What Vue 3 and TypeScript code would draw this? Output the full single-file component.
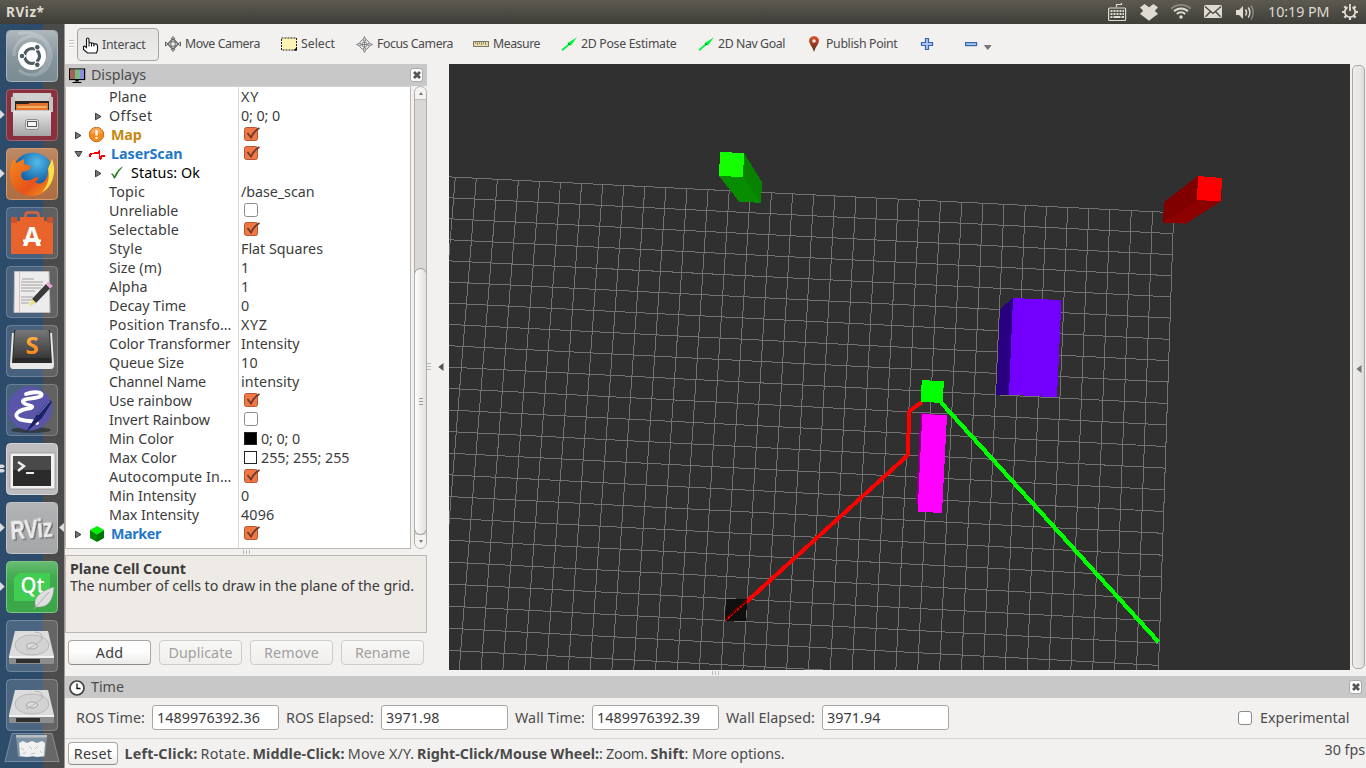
<script setup lang="ts">
import type { Directive } from 'vue'

// Tracks a label out (or in) so that it occupies the given width in pixels.
const vFit: Directive<HTMLElement, number> = {
  mounted(el, { value }) {
    if (!value) return
    const n = (el.textContent ?? '').length
    const natural = el.getBoundingClientRect().width
    if (n) el.style.letterSpacing = `${((value - natural) / n).toFixed(3)}px`
  },
}

interface Row {
  name: string
  w: number
  level: 0 | 1
  arrow?: 'right' | 'down'
  icon?: 'warn' | 'laser' | 'ok' | 'cube'
  tone?: 'gold' | 'blue' | 'black'
  value?: string
  vw?: number
  check?: boolean
  swatch?: 'black' | 'white'
}

const rows: Row[] = [
  { name: 'Plane', w: 37.5, level: 1, value: 'XY', vw: 18 },
  { name: 'Offset', w: 43.5, level: 1, arrow: 'right', value: '0; 0; 0', vw: 39 },
  { name: 'Map', w: 30.5, level: 0, arrow: 'right', icon: 'warn', tone: 'gold', check: true },
  { name: 'LaserScan', w: 71.5, level: 0, arrow: 'down', icon: 'laser', tone: 'blue', check: true },
  { name: 'Status: Ok', w: 69, level: 1, arrow: 'right', icon: 'ok', tone: 'black' },
  { name: 'Topic', w: 36, level: 1, value: '/base_scan', vw: 73.5 },
  { name: 'Unreliable', w: 69.5, level: 1, check: false },
  { name: 'Selectable', w: 70, level: 1, check: true },
  { name: 'Style', w: 33.5, level: 1, value: 'Flat Squares', vw: 82 },
  { name: 'Size (m)', w: 52.5, level: 1, value: '1', vw: 8 },
  { name: 'Alpha', w: 38.5, level: 1, value: '1', vw: 8 },
  { name: 'Decay Time', w: 77, level: 1, value: '0', vw: 8 },
  { name: 'Position Transfo…', w: 122.5, level: 1, value: 'XYZ', vw: 26.5 },
  { name: 'Color Transformer', w: 121.5, level: 1, value: 'Intensity', vw: 58.5 },
  { name: 'Queue Size', w: 75, level: 1, value: '10', vw: 17 },
  { name: 'Channel Name', w: 97, level: 1, value: 'intensity', vw: 58.5 },
  { name: 'Use rainbow', w: 83, level: 1, check: true },
  { name: 'Invert Rainbow', w: 101, level: 1, check: false },
  { name: 'Min Color', w: 65, level: 1, swatch: 'black', value: '0; 0; 0', vw: 39 },
  { name: 'Max Color', w: 67.5, level: 1, swatch: 'white', value: '255; 255; 255', vw: 88.5 },
  { name: 'Autocompute In…', w: 122.5, level: 1, check: true },
  { name: 'Min Intensity', w: 87, level: 1, value: '0', vw: 8 },
  { name: 'Max Intensity', w: 90, level: 1, value: '4096', vw: 33.5 },
  { name: 'Marker', w: 50, level: 0, arrow: 'right', icon: 'cube', tone: 'blue', check: true },
]

const buttons = [
  { label: 'Add', w: 27.5, off: false },
  { label: 'Duplicate', w: 64, off: true },
  { label: 'Remove', w: 55, off: true },
  { label: 'Rename', w: 55, off: true },
]

const fields = [
  { label: 'ROS Time:', w: 69, value: '1489976392.36', vw: 103 },
  { label: 'ROS Elapsed:', w: 88, value: '3971.98', vw: 53.5 },
  { label: 'Wall Time:', w: 70, value: '1489976392.39', vw: 103 },
  { label: 'Wall Elapsed:', w: 89, value: '3971.94', vw: 53.5 },
]

const hints = [
  { t: 'Left-Click:', w: 73, end: 76, b: true },
  { t: 'Rotate.', w: 49.5, end: 52, b: false },
  { t: 'Middle-Click:', w: 92, end: 95.3, b: true },
  { t: 'Move X/Y.', w: 66.5, end: 69.2, b: false },
  { t: 'Right-Click/Mouse Wheel:', w: 182, end: 182, b: true },
  { t: ': Zoom.', w: 48.5, end: 51.5, b: false },
  { t: 'Shift', w: 34, end: 34, b: true },
  { t: ': More options.', w: 100, end: 100, b: false },
]

// Ground-plane cell (u, v) projected to viewport pixels.
function project(u: number, v: number): string {
  const k = -0.000134 * u - 0.0013621 * v + 1
  const x = (20.9717 * u - 2.2942 * v + 455.3) / k - 449
  const y = (1.0156 * u + 20.5492 * v + 177.2) / k - 64
  return `${x.toFixed(2)} ${y.toFixed(2)}`
}

const segs: string[] = []
for (let u = -1; u <= 34; u++) segs.push(`M${project(u, 0)}L${project(u, 26)}`)
for (let v = 0; v <= 25; v++) segs.push(`M${project(-2, v)}L${project(34, v)}`)
const gridPath = segs.join('')
</script>

<template>
  <div class="desk">
    <header class="topbar">
      <span class="title"><span v-fit="38.5">RViz*</span></span>
      <svg class="tray" width="150" height="24" viewBox="1106 0 150 24">
        <g fill="none" stroke="#dfdbd2" stroke-width="1.2">
          <path d="M1116.500 7V4.500H1121.500V3" />
          <rect x="1108.600" y="8" width="17" height="12.500" rx="1" />
        </g>
        <g fill="#dfdbd2">
          <path d="M1110.500 10h2v2h-2zm3 0h2v2h-2zm3 0h2v2h-2zm3 0h2v2h-2zm3 0h1.500v2h-1.500zM1110.500 13h2v2h-2zm3 0h2v2h-2zm3 0h2v2h-2zm3 0h2v2h-2zm3 0h1.500v2h-1.500zM1110.500 16h2v2h-2zm3 0h7v2h-7zm8 0h2.500v2h-2.500z" />
          <path d="M1144.500 4L1149 7.200l4.500-3.200 4.500 3.500-3.200 3.300 3.200 3.300-3.500 2.400-5.500 4.300-5.500-4.300-3.500-2.400 3.200-3.300-3.200-3.300z" />
          <path d="M1205.500 5h15a1.500 1.500 0 0 1 1.500 1.500v10a1.500 1.500 0 0 1-1.500 1.500h-15a1.500 1.500 0 0 1-1.500-1.500v-10a1.500 1.500 0 0 1 1.500-1.500z" />
          <path d="M1236 10h3l4-4v13l-4-4h-3z" />
          <circle cx="1181" cy="17" r="1.700" />
        </g>
        <g fill="none" stroke="#dfdbd2" stroke-width="1.900">
          <path d="M1176.800 14a6 6 0 0 1 8.400 0M1174 11.300a10 10 0 0 1 14 0" />
          <path d="M1171.300 8.800a14 14 0 0 1 19.400 0" opacity=".4" />
          <path d="M1245.500 9.500q2 3 0 6M1248.300 7.500q3.200 5 0 10" stroke-width="1.500" />
          <path d="M1251 5.500q4.500 7 0 14" stroke-width="1.500" opacity=".4" />
          <path d="M1205 6.500l8 7 8-7M1205.500 16.800l4.800-5M1220.500 16.800l-4.800-5" stroke="#45443e" stroke-width="1.300" />
        </g>
      </svg>
      <span class="clock"><span v-fit="61.500">10:19 PM</span></span>
      <svg class="gear" width="18" height="18" viewBox="-9 -9 18 18">
        <circle r="5.200" fill="none" stroke="#dfdbd2" stroke-width="1.800" />
        <path d="M0 5v3M5 0h3M-5 0h-3M3.600 3.600l2 2M-3.600 3.600l-2 2M3.600-3.600l2-2M-3.600-3.600l-2-2" stroke="#dfdbd2" stroke-width="2.200" />
        <path d="M0-8v7" stroke="#4b4a43" stroke-width="4.500" />
        <path d="M0-8v7" stroke="#dfdbd2" stroke-width="1.900" />
      </svg>
    </header>

    <div class="body">
      <nav class="launcher">
        <svg width="65" height="744" viewBox="0 24 65 744">
          <defs>
            <linearGradient id="gloss" x1="0" y1="0" x2="0" y2="1">
              <stop offset="0" stop-color="#fff" stop-opacity=".38" />
              <stop offset=".5" stop-color="#fff" stop-opacity=".1" />
              <stop offset="1" stop-color="#fff" stop-opacity="0" />
            </linearGradient>
            <linearGradient id="steel" x1="0" y1="0" x2="0" y2="1">
              <stop offset="0" stop-color="#e6e6e6" />
              <stop offset="1" stop-color="#a6a6a6" />
            </linearGradient>
            <linearGradient id="dark" x1="0" y1="0" x2="0" y2="1">
              <stop offset="0" stop-color="#777" />
              <stop offset="1" stop-color="#383838" />
            </linearGradient>
            <linearGradient id="sand" x1="0" y1="0" x2="0" y2="1">
              <stop offset="0" stop-color="#ffc05c" />
              <stop offset="1" stop-color="#ff7a0a" />
            </linearGradient>
            <radialGradient id="globe" cx=".6" cy=".25" r=".8">
              <stop offset="0" stop-color="#52bbea" />
              <stop offset=".6" stop-color="#1565a8" />
              <stop offset="1" stop-color="#0e2f6c" />
            </radialGradient>
            <linearGradient id="fox" x1="0" y1="0" x2="1" y2="1">
              <stop offset="0" stop-color="#f58a1e" />
              <stop offset=".6" stop-color="#e5531b" />
              <stop offset="1" stop-color="#f8a01e" />
            </linearGradient>
          </defs>

          <!-- dash -->
          <rect x="6.500" y="30.500" width="51" height="51" rx="4" fill="#7b8b93" stroke="#a9b3b8" />
          <path d="M14 56C13 38 35 30 45 42 53 52 47 69 34 76M50 56C52 74 30 80 19 70M18 34C33 30 53 38 51 60" fill="none" stroke="#b5bfc4" stroke-width="3" opacity=".45" />
          <rect x="7" y="31" width="50" height="50" rx="4" fill="url(#gloss)" />
          <circle cx="32" cy="56" r="14" fill="#fff" />
          <circle cx="32" cy="56" r="7.500" fill="none" stroke="#4d5a60" stroke-width="3.200" />
          <path d="M26 56L22 56M34.800 51.500L37.500 47M34.800 60.500L37.500 65" stroke="#fff" stroke-width="1.600" />
          <g fill="#4d5a60" stroke="#fff"><circle cx="22" cy="56" r="2.800" /><circle cx="37.300" cy="47.200" r="2.800" /><circle cx="37.300" cy="64.800" r="2.800" /></g>

          <!-- files -->
          <rect x="6.500" y="89.500" width="51" height="51" rx="4" fill="#89303f" stroke="#a6616c" />
          <path d="M13 93H51L53 112H11z" fill="#d0d0d0" />
          <rect x="15" y="101" width="34" height="11" fill="#2c2421" />
          <path d="M16 104h12l2-1h18v9H16z" fill="#e27430" />
          <path d="M17 106h30v2H17z" fill="#f0b05c" />
          <path d="M16 108h32v3H16z" fill="#e8742c" />
          <path d="M11 97H15V111H49V97H53V110H11z" fill="#c4c4c4" />
          <rect x="13" y="111" width="38" height="25" rx="1" fill="url(#steel)" />
          <rect x="25.500" y="119.500" width="13" height="10" rx="2" fill="#e8e8e8" stroke="#8c8c8c" />
          <rect x="27.500" y="121.500" width="9" height="5" fill="#f5f5f5" stroke="#555" />

          <!-- firefox -->
          <rect x="6.500" y="148.500" width="51" height="51" rx="4" fill="#b06f42" stroke="#cf9a74" />
          <rect x="7" y="149" width="50" height="48" rx="4" fill="url(#gloss)" opacity=".5" />
          <circle cx="33" cy="173" r="20.500" fill="url(#globe)" />
          <path d="M52 160C58 180 46 197 31 196 17 195 9 186 10 171 10 166 12 162 14 158L16 163 24 159 24 164 31 166 29 170 22 172C19 178 25 184 34 178 38 176 41 179 35 182 42 187 49 179 48 168z" fill="url(#fox)" />
          <path d="M52 159C57 171 53 187 42 192 50 183 49 175 48 169z" fill="#fbe04a" />

          <!-- software -->
          <rect x="6.500" y="207.500" width="51" height="51" rx="4" fill="#fff" fill-opacity=".12" stroke="#fff" stroke-opacity=".25" />
          <path d="M25.500 224V215Q25.500 212.500 28 212.500H36Q38.500 212.500 38.500 215V224" fill="none" stroke="#d9633a" stroke-width="2.600" />
          <path d="M11 217H17V221H20V217H44V221H47V217H53V254H11z" fill="#e9632c" />
          <path d="M11 217H17V223H11zM47 217H53V223H47z" fill="#cc5227" />
          <text x="32" y="246" text-anchor="middle" class="store">A</text>
          <path d="M23 239.500H41V242H23z" fill="#fff" />

          <!-- text editor -->
          <rect x="6.500" y="266.500" width="51" height="51" rx="4" fill="#fff" fill-opacity=".13" stroke="#fff" stroke-opacity=".25" />
          <path d="M14.500 271.500H49L50 312.500H14z" fill="#ececec" stroke="#bbb" />
          <path d="M19.500 272V312" stroke="#e9a5a5" stroke-width=".7" />
          <path d="M22 279h12M21 282h22M21 285h22M21 288h20M21 291h14M21 297h12M21 300h16M21 303h8" stroke="#999" stroke-width=".9" />
          <path d="M32 299L46 284 50 288.500 36 303z" fill="#3a3a3a" />
          <path d="M46 284L48 282 53 286 50 288.500z" fill="#e6a5d6" />
          <path d="M32 299L36 303 29 306.500z" fill="#ecdf84" />

          <!-- sublime -->
          <rect x="6.500" y="325.500" width="51" height="51" rx="4" fill="#fff" fill-opacity=".13" stroke="#fff" stroke-opacity=".25" />
          <path d="M12 333L10 365Q10 369 13 369H51Q54 369 54 365L52 333z" fill="#e8e8e8" />
          <path d="M14 332Q14 330 16 330H48Q50 330 50 332L52 363H12z" fill="#292929" />
          <path d="M15 332Q15 330 17 330H47Q49 330 49 332L51 358H13z" fill="url(#dark)" />
          <text x="32" y="353.500" text-anchor="middle" class="subl">S</text>

          <!-- emacs -->
          <rect x="6.500" y="384.500" width="51" height="51" rx="4" fill="#fff" fill-opacity=".13" stroke="#fff" stroke-opacity=".25" />
          <ellipse cx="31" cy="430" rx="20" ry="3" fill="#222" opacity=".6" />
          <circle cx="30" cy="408.500" r="22" fill="#5a55a8" />
          <path d="M26 394C34 391 44 392 41 396 37 399 21 398 23 402 25 406 36 405 31 408 17 410 13 415 19 419 25 422 34 420 37 423" fill="none" stroke="#fff" stroke-width="3.800" stroke-linecap="round" />
          <path d="M26 432L36 416 50 400 52 402 42 418 31 428z" fill="#1c2266" />
          <path d="M38 415L50 401" stroke="#7d86c9" />

          <!-- terminal -->
          <rect x="6.500" y="443.500" width="51" height="51" rx="4" fill="#bdbdbf" stroke="#d5d5d6" />
          <rect x="10" y="453" width="45" height="36" rx="1.500" fill="#f1f1f1" stroke="#8a8a8a" stroke-width=".7" />
          <rect x="13" y="456" width="38" height="30" fill="#2b2b2b" />
          <rect x="13" y="456" width="38" height="14" fill="#494949" />
          <path d="M18 462l6 4-6 5" fill="none" stroke="#eee" stroke-width="2.400" />
          <path d="M26 473h8" stroke="#eee" stroke-width="2" />

          <!-- rviz -->
          <rect x="6.500" y="502.500" width="51" height="51" rx="4" fill="#a5a7a9" stroke="#c2c3c5" />
          <rect x="7" y="503" width="50" height="50" rx="4" fill="url(#gloss)" opacity=".4" />
          <text x="10.500" y="537.500" textLength="42" lengthAdjust="spacingAndGlyphs" transform="rotate(-4 32 528)" class="rviz">RViz</text>

          <!-- qt -->
          <rect x="6.500" y="561.500" width="51" height="51" rx="4" fill="#3ba748" stroke="#7fc689" />
          <rect x="7" y="562" width="50" height="26" rx="4" fill="url(#gloss)" opacity=".6" />
          <path d="M19 573H50V601H14V578z" fill="#41cd52" />
          <text x="20.500" y="593" textLength="24" lengthAdjust="spacingAndGlyphs" class="qt">Qt</text>
          <path d="M54 587C53 603 46 608 36 607 32 599 40 591 54 587z" fill="#dedede" stroke="#999" stroke-width=".5" />
          <path d="M34 609L49 592" stroke="#a9a9a9" stroke-width=".9" />

          <!-- drives -->
          <g v-for="dy in [0, 59]" :key="dy" :transform="`translate(0 ${dy})`">
            <rect x="6.500" y="620.500" width="51" height="51" rx="4" fill="#fff" fill-opacity=".15" stroke="#fff" stroke-opacity=".28" />
            <path d="M15 631H48L54 656H9z" fill="#dcdcdc" />
            <path d="M9 656H54V663Q54 664 53 664H10Q9 664 9 663z" fill="#8d8d8d" />
            <path d="M9 656H54V658H9z" fill="#f2f2f2" />
            <path d="M16 659H40V663H16z" fill="#2f2f2f" />
            <ellipse cx="32" cy="645" rx="17" ry="10" fill="#d2d2d2" stroke="#aaa" stroke-width=".7" />
            <ellipse cx="32" cy="646" rx="5.500" ry="3" fill="#ddd" stroke="#999" stroke-width=".8" />
            <path d="M35 632Q44 633 42 639 37 645 26 650" fill="none" stroke="#aaa" stroke-width=".8" />
          </g>

          <!-- trash -->
          <path d="M12 733.500H52L59 761.500H5z" fill="#fff" fill-opacity=".16" stroke="#fff" stroke-opacity=".3" />
          <path d="M16 736L18 757H45L47 736z" fill="#8fa0ad" opacity=".75" />
          <path d="M19 743l4-2 4 2 5-2 5 2 5-2 3 2-1 13-7 1-4-1-6 1-7-1z" fill="#f0f0f0" />
          <path d="M21 748l3 2M29 746l3 3M38 746l-3 3M23 754l3-2M31 754l4-1M40 751l2 2" fill="none" stroke="#c2c5c6" />
          <path d="M16 735h31v2.500H16z" fill="#b8c0c5" />

          <g fill="#dcdcdc">
            <path d="M0 110l4.700 4.500L0 119zM0 169l4.700 4.500L0 178zM0 523l4.700 4.500L0 532zM0 582l4.700 4.500L0 591zM64 523l-5 4.500 5 4.500z" />
            <path d="M0 464.500h3l2 1.700-2 1.700H0zM0 469h3l2 1.700-2 1.700H0z" />
          </g>
        </svg>
      </nav>

      <main class="window">
        <div class="toolbar">
          <i class="grip"></i>
          <div class="tool pressed">
            <svg width="17" height="17" viewBox="0 0 17 17"><path d="M4.500 10.500V2.500Q4.500 1 5.700 1T7 2.500V6.500Q7 5.500 8.200 5.500T9.500 7Q9.700 6 10.800 6T12 7.500Q12.400 6.800 13.300 6.800 15.500 7 15.500 9V13L14.500 16H5.500L1.500 12.500V9.500Q2.500 8.500 4.500 10.500z" fill="#fff" stroke="#111" stroke-width="1.100" /><path d="M7 6.500V9.500M9.500 7V9.500M12 7.500V9.500" stroke="#111" /></svg>
            <span v-fit="43.500">Interact</span>
          </div>
          <div class="tool">
            <svg width="16" height="16" viewBox="0 0 16 16" fill="none" stroke="#555" stroke-width=".9"><ellipse cx="8" cy="8" rx="5" ry="2.200" /><ellipse cx="8" cy="8" rx="2.200" ry="5" /><circle cx="8" cy="8" r="4.200" /><path d="M8 .5l2 2.500H6zM8 15.500l2-2.500H6zM.5 6v4l2.700-2zM15.500 6v4l-2.700-2z" fill="#eee" /></svg>
            <span v-fit="75">Move Camera</span>
          </div>
          <div class="tool">
            <svg width="16" height="16" viewBox="0 0 16 16"><rect x=".5" y="2" width="15" height="12" fill="#fdf3b3" stroke="#222" stroke-dasharray="2 1" /><path d="M16 11v3.500h-3.500z" fill="#000" /></svg>
            <span v-fit="34">Select</span>
          </div>
          <div class="tool">
            <svg width="17" height="17" viewBox="0 0 17 17" fill="none" stroke="#777" stroke-width=".9"><circle cx="8.500" cy="8.500" r="5" /><circle cx="8.500" cy="8.500" r="2.600" /><path d="M4 8.500h9M8.500 4v9" /><path d="M8.500 .500l1.300 3-1.300 2.500-1.300-2.500zM8.500 16.500l1.300-3-1.300-2.500-1.300 2.500zM.5 8.500l3-1.300L6 8.500 3.500 9.800zM16.500 8.500l-3-1.300L11 8.500l2.500 1.300z" fill="#ddd" /></svg>
            <span v-fit="76">Focus Camera</span>
          </div>
          <div class="tool">
            <svg width="16" height="16" viewBox="0 0 16 16"><rect x=".5" y="5.500" width="15" height="5" fill="#e8dda4" stroke="#7c7768" /><path d="M2.500 6v2M4.500 6v3M6.500 6v2M8.500 6v3M10.500 6v2M12.500 6v3" stroke="#7c7768" stroke-width=".8" /></svg>
            <span v-fit="47">Measure</span>
          </div>
          <div class="tool" v-for="t in [{ l: '2D Pose Estimate', w: 95.5 }, { l: '2D Nav Goal', w: 67 }]" :key="t.l">
            <svg width="16" height="16" viewBox="0 0 16 16"><path d="M.5 13.500L7 8 6.500 7 15.800 1.500 10 9.500 9 8.800 1.500 15z" fill="#00f43a" /><path d="M7 7.600l2.200 1.200" stroke="#064" stroke-width="1" /></svg>
            <span v-fit="t.w">{{ t.l }}</span>
          </div>
          <div class="tool">
            <svg width="16" height="16" viewBox="0 0 16 16"><defs><linearGradient id="pin" x1="0" y1="0" x2="0" y2="1"><stop offset="0" stop-color="#e2502c" /><stop offset="1" stop-color="#4f2a16" /></linearGradient></defs><path d="M8 16Q7 12 4.300 8.500 2.300 5 3.600 2.500 5 0 8 0t4.400 2.500Q13.700 5 11.700 8.500 9 12 8 16z" fill="url(#pin)" /><circle cx="8" cy="5" r="1.800" fill="#f6e5e0" /></svg>
            <span v-fit="71.500">Publish Point</span>
          </div>
          <div class="tool"><svg width="16" height="16" viewBox="0 0 16 16"><path d="M6.500 2.500h3v4h4v3h-4v4h-3v-4h-4v-3h4z" fill="#a9c6ea" stroke="#3667ad" stroke-width="1.200" /></svg></div>
          <div class="tool minus"><svg width="30" height="16" viewBox="0 0 30 16"><rect x="2.600" y="6.600" width="11" height="3" fill="#a9c6ea" stroke="#3667ad" stroke-width="1.200" /><path d="M21.500 9.500h6.500l-3.200 4z" fill="#777" stroke="#555" stroke-width=".6" /></svg></div>
        </div>

        <div class="mid">
          <section class="dock">
            <div class="dockhead">
              <svg width="17" height="17" viewBox="0 0 17 17"><rect x=".6" y="2" width="15" height="10.500" fill="#9fd49f" stroke="#000" stroke-width="1.200" /><path d="M1.200 2.600h4.900v9.300H1.200z" fill="#a85c5c" /><path d="M6.100 2.600h4.500v9.300H6.100z" fill="#74bd78" /><path d="M10.600 2.600h4.400v9.300H10.600z" fill="#8c8ce0" /><path d="M6.500 13h3l.5 1.500H6zM3.500 15h9v1h-9z" fill="#000" /></svg>
              <span v-fit="55">Displays</span>
              <i class="close"><svg width="8" height="8" viewBox="0 0 8 8"><path d="M1 1l6 6M7 1l-6 6" stroke="#555" stroke-width="2.800" /></svg></i>
            </div>
            <div class="treewrap">
              <div class="tree">
                <div v-for="r in rows" :key="r.name" class="row">
                  <div class="name" :class="['lv' + r.level, r.tone]">
                    <span class="arrow">
                      <svg v-if="r.arrow" width="9" height="9" viewBox="0 0 9 9"><path :d="r.arrow === 'right' ? 'M1.500 1.200L7 4.500 1.500 7.800z' : 'M1 1.500H8L4.500 7z'" fill="#777" stroke="#3c3c3c" /></svg>
                    </span>
                    <span v-if="r.icon" class="ico">
                      <svg v-if="r.icon === 'warn'" width="16" height="16" viewBox="0 0 16 16"><circle cx="7.500" cy="7.500" r="7.200" fill="#f68a1c" stroke="#cc6410" /><path d="M1.500 6.500a6 6 0 0 1 12 0z" fill="#fbb062" opacity=".7" /><path d="M7.500 3v5.500M7.500 10v2" stroke="#fff" stroke-width="2.200" /></svg>
                      <svg v-else-if="r.icon === 'laser'" width="17" height="16" viewBox="0 0 17 16"><path d="M.8 10.500V9L2.500 7.500H5L6.500 6.800H9.500L10.500 5.500V10L11.500 12.500 13 9.800 16 9.800" fill="none" stroke="#f00" stroke-width="1.900" shape-rendering="crispEdges" /></svg>
                      <svg v-else-if="r.icon === 'ok'" width="15" height="15" viewBox="0 0 15 15"><path d="M1 9Q2.500 7.500 4.500 11 7.500 4 13.500 1 8.500 6 5 13.500H4Q3 10 1 9z" fill="#1f7d1f" /></svg>
                      <svg v-else width="16" height="16" viewBox="0 0 16 16"><path d="M8 0l7 4-7 4.500L1 4z" fill="#00f200" /><path d="M1 4l7 4.500V16L1 12z" fill="#008a00" /><path d="M15 4L8 8.500V16l7-4z" fill="#007400" /></svg>
                    </span>
                    <span class="lbl" v-fit="r.w">{{ r.name }}</span>
                  </div>
                  <div class="val">
                    <svg v-if="r.check !== undefined" class="cb" width="17" height="16" viewBox="0 0 17 16">
                      <rect x="1.500" y="1.500" width="13" height="13" rx="2" :fill="r.check ? '#f07746' : '#fff'" :stroke="r.check ? '#b8552f' : '#8f8b86'" />
                      <path v-if="r.check" d="M4.500 7l3.500 4.500Q11 5 16.500 2" fill="none" stroke="#6b3c2a" stroke-width="1.800" />
                    </svg>
                    <i v-if="r.swatch" class="swatch" :class="r.swatch"></i>
                    <span v-if="r.value" class="lbl" v-fit="r.vw ?? 0">{{ r.value }}</span>
                  </div>
                </div>
              </div>
              <div class="scroll">
                <i class="sarrow up"></i>
                <i class="thumb"><b></b></i>
                <i class="sarrow down"></i>
              </div>
            </div>
            <div class="hgrip"><i></i></div>
            <div class="desc">
              <div><b v-fit="116">Plane Cell Count</b></div>
              <div><span v-fit="344">The number of cells to draw in the plane of the grid.</span></div>
            </div>
            <div class="btns">
              <button v-for="b in buttons" :key="b.label" :class="{ off: b.off }"><span v-fit="b.w">{{ b.label }}</span></button>
            </div>
          </section>

          <div class="vsplit">
            <i class="grip"></i>
            <svg width="6" height="8" viewBox="0 0 6 8"><path d="M5.500 0v8L.3 4z" fill="#555" /></svg>
          </div>

          <svg class="view" width="901" height="606" viewBox="0 0 901 606">
            <rect width="901" height="606" fill="#303030" />
            <path :d="gridPath" fill="none" stroke="#727272" shape-rendering="crispEdges" />
            <g transform="translate(-449 -64)" shape-rendering="crispEdges">
              <path d="M719 176L743 176 761 203 739 201.500z" fill="#088c00" />
              <path d="M744 153L762 182 761 203 743 177z" fill="#088000" />
              <path d="M720 152L744 153 743 177 719 176z" fill="#14ff00" />
              <path d="M1197 200L1221 201.300 1185.500 223.700 1163 222.500z" fill="#8c0000" />
              <path d="M1198 176V200L1163 222.500 1164 202z" fill="#800000" />
              <path d="M1198 176L1222 178 1221 201.300 1197 200z" fill="#f00" />
              <path d="M1013 298L1009 395.500 996 395 1000 309z" fill="#290080" />
              <path d="M1013 298L1061.500 300 1057 397.300 1009 394.700z" fill="#7300ff" />
              <path d="M922 402L909.500 411 907.500 455.500 726.500 620" fill="none" stroke="#f00" stroke-width="4" />
              <path d="M941 402.500L1158.500 642" fill="none" stroke="#0f0" stroke-width="4.200" />
              <path d="M726 599H747L746 621H725z" fill="#0f0f0f" />
              <path d="M726 619.500L746 601" stroke="#4a0000" stroke-width="3.500" />
              <path d="M725 621L748 600.500" stroke="#f00" stroke-width="1" stroke-dasharray="3 1" />
              <path d="M920.300 413L946 415 941 512 916 503z" fill="#800080" />
              <path d="M922.300 414L947 415.500 942 513 917.700 511.700z" fill="#f0f" />
              <path d="M921.700 380L943.800 381.300 942.800 403 921 401.700z" fill="#0f0" />
            </g>
          </svg>

          <div class="rsplit"><span><svg width="6" height="8" viewBox="0 0 6 8"><path d="M5.500 0v8L.3 4z" fill="#777" /></svg></span></div>
        </div>

        <div class="hgrip wide"><i></i></div>
        <div class="dockhead time">
          <svg width="17" height="17" viewBox="0 0 17 17"><circle cx="8" cy="9" r="7" fill="#fff" stroke="#444" stroke-width="1.700" /><path d="M8 4.500v5H11.500" fill="none" stroke="#111" stroke-width="1.300" /></svg>
          <span v-fit="33">Time</span>
          <i class="close"><svg width="8" height="8" viewBox="0 0 8 8"><path d="M1 1l6 6M7 1l-6 6" stroke="#555" stroke-width="2.800" /></svg></i>
        </div>
        <div class="fields">
          <div v-for="f in fields" :key="f.label" class="field">
            <label><span v-fit="f.w">{{ f.label }}</span></label>
            <div class="input"><span v-fit="f.vw">{{ f.value }}</span></div>
          </div>
          <div class="exp"><i></i><span v-fit="89.500">Experimental</span></div>
        </div>
        <footer class="status">
          <button class="reset"><span v-fit="38.500">Reset</span></button>
          <p>
            <span v-for="h in hints" :key="h.t" class="seg" :class="{ bold: h.b }" :style="{ marginRight: h.end - h.w + 'px' }" v-fit="h.w">{{ h.t }}</span>
          </p>
          <span class="fps"><span v-fit="40.500">30 fps</span></span>
        </footer>
      </main>
    </div>
  </div>
</template>

<style>
body { margin: 0; overflow: hidden; }
</style>

<style scoped>
.desk {
  width: 1366px; height: 768px; display: flex; flex-direction: column; overflow: hidden;
  font-family: "Noto Sans", "Open Sans", sans-serif; font-size: 14.300px; color: #3c3c3c;
  background: #f2f1f0;
}
.desk * { box-sizing: border-box; }
svg { display: block; flex: none; }
span { white-space: pre; }
span > span, .desc b, .desc span { display: inline-block; }

.topbar {
  height: 24px; flex: none; display: flex; align-items: center; color: #dfdbd2;
  background: linear-gradient(#5c5a50, #3f3e39);
}
.title { width: 1106px; padding-left: 6px; font-weight: 700; font-size: 13.500px; line-height: 24px; }
.title span { display: inline-block; }
.clock { width: 72px; padding-left: 12px; font-size: 14.300px; line-height: 24px; }
.gear { margin-left: 13px; }

.body { flex: 1; display: flex; }
.launcher {
  width: 65px; flex: none; border-right: 1px solid #a59690; overflow: hidden;
  background: linear-gradient(90deg, #2d4b6b 0 43px, #4a4b4a 43px);
}
.window { flex: 1; display: flex; flex-direction: column; background: #f2f1f0; }

.toolbar {
  height: 40px; display: grid; align-items: center; font-size: 12.300px; color: #4a4a4a;
  grid-template-columns: 12px 88px 116px 75px 117px 88px 137px 108px 113px 44px 60px;
}
.grip { width: 5px; height: 8px; margin-left: 4px; background: repeating-linear-gradient(#c4c2bf 0 1px, #fff 1px 2px, transparent 2px 3px); }
.tool { display: flex; align-items: center; gap: 4px; height: 33px; }
.tool span { display: inline-block; margin-top: -1px; }
.pressed {
  width: 82px; gap: 3.500px; padding: 2px 0 0 4px; border: 1px solid #a6a4a1; border-radius: 4px;
  background: linear-gradient(#e4e3e2, #ededec);
}
.pressed svg { margin-left: -.5px; }

.mid { height: 606px; display: flex; }
.dock { width: 362px; flex: none; display: flex; flex-direction: column; }
.dockhead {
  height: 22px; flex: none; display: flex; align-items: center; gap: 5px; padding-left: 4px;
  background: #c8c8c8; color: #4c4c4c;
}
.dockhead span { display: inline-block; line-height: 20px; }
.close {
  margin: 0 4px 0 auto; width: 13px; height: 14px; display: flex; align-items: center; justify-content: center;
  border-radius: 3px; background: #fbfbfb; border: 1px solid #aaa;
}

.treewrap { height: 463px; display: flex; }
.tree {
  width: 346px; height: 463px; padding-top: .5px; overflow: hidden; border: 1px solid #bab7b2; border-top-color: #d5d3d0;
  background: linear-gradient(90deg, #fff 172px, #d8d8d8 172px 173px, #fff 173px);
}
.row { height: 19px; display: flex; }
.name { width: 175px; display: flex; align-items: center; line-height: 19px; padding-left: 8px; }
.name.lv1 { padding-left: 28px; }
.name span { display: inline-block; }
.row .lbl { display: inline-block; margin-top: -2px; }
.arrow { width: 9px; height: 9px; }
.lv1 .arrow { width: 15px; }
.ico { width: 16px; margin: -1px 6px 0 6px; }
.lv1 .ico { width: 15px; margin: -1px 6.500px 0 .5px; }
.gold { color: #c4890f; font-weight: 700; }
.blue { color: #2377c8; font-weight: 700; }
.black { color: #000; }
.val { display: flex; align-items: center; line-height: 19px; }
.cb { margin: -2px 0 0 1.500px; }
.swatch { width: 13px; height: 13px; margin: -1px 4px 0 3px; border: 1px solid #222; background: #fff; }
.swatch.black { background: #000; }

.scroll {
  width: 13px; margin-left: 3px; border: 1px solid #b1aeaa; border-radius: 7px; background: #dad8d6;
  display: flex; flex-direction: column; overflow: hidden;
}
.sarrow { height: 13px; flex: none; background: #f4f3f2; display: flex; align-items: center; justify-content: center; }
.sarrow::after { content: ""; border: 2.500px solid transparent; border-top-width: 0; border-bottom: 3px solid #777; }
.down::after { transform: rotate(180deg); }
.up { border-bottom: 1px solid #c0bdb9; }
.thumb {
  height: 267px; flex: none; margin: auto -1px 0; border: 1px solid #999; border-radius: 7px; display: flex;
  align-items: center; justify-content: center; background: linear-gradient(90deg, #fdfdfd, #e2e1e0);
}
.thumb b { width: 4px; height: 8px; background: repeating-linear-gradient(#999 0 1px, transparent 1px 3px); }

.hgrip { height: 6px; flex: none; display: flex; align-items: center; justify-content: center; }
.hgrip i { width: 7px; height: 4px; background: repeating-linear-gradient(90deg, #bbb 0 1px, transparent 1px 3px); }

.desc {
  height: 78px; border: 1px solid #bab7b2; background: #eeebe7; padding: 4px 0 0 4px; line-height: 17px;
}
.desc div { height: 17px; white-space: pre; }
.btns { display: flex; gap: 8px; padding: 7px 0 0 3px; }
button {
  width: 83px; height: 25px; padding: 0; font: inherit; line-height: 21px; color: #3c3c3c; text-align: center;
  border: 1px solid #aaa7a3; border-bottom-color: #8f8c88; border-radius: 4px;
  background: linear-gradient(#fff, #fcfcfc 50%, #ebebea);
}
button span { display: inline-block; }
button.off { color: #a2a09d; border-color: #cfcdca; background: linear-gradient(#f8f8f7, #efeeed); }

.vsplit { width: 22px; flex: none; display: flex; align-items: center; justify-content: space-between; padding: 0 5px 0 0; }
.vsplit .grip { margin-left: 0; width: 4px; background: repeating-linear-gradient(#bbb 0 1px, transparent 1px 3px); }
.rsplit { width: 16px; padding: 1px 1px 1px 2px; }
.rsplit span {
  display: flex; width: 13px; height: 604px; padding-top: 3px; align-items: center; justify-content: center;
  border: 1px solid #aaa8a5; border-radius: 5px; background: linear-gradient(90deg, #eeedec, #e8e7e6 60%, #dcdbd9);
}

.fields { height: 41px; display: flex; padding: 7px 0 0 11px; border-bottom: 1px solid #d5d3d1; color: #4c4c4c; }
.field { display: flex; line-height: 25px; }
.field + .field { margin-left: 6px; }
.field label { padding: 0 7px 0 1px; }
.field:first-child label { padding-left: 0; }
.field span { display: inline-block; }
.input {
  width: 127px; height: 25px; padding-left: 4px; line-height: 23px; color: #3c3c3c; background: #fff;
  border: 1px solid #a9a6a2; border-radius: 3px; white-space: nowrap;
}
.exp { margin: 0 16.500px 0 auto; display: flex; align-items: center; height: 25px; gap: 8px; }
.exp i { width: 14px; height: 14px; border: 1px solid #8f8b86; border-radius: 3px; background: #fff; }
.exp span { display: inline-block; }

.status { height: 29px; display: flex; align-items: flex-start; padding: 3px 0 0 3px; color: #4a4a4a; }
.reset { width: 50px; height: 23px; line-height: 20px; }
.status p { margin: 0 0 0 6.500px; display: flex; line-height: 23px; }
.seg { display: inline-block; }
.bold { font-weight: 700; }
.fps { margin: 0 1px 0 auto; line-height: 16px; }
.fps span { display: inline-block; }

.store { font: 700 26px "Open Sans", sans-serif; fill: #fff; }
.subl { font: 700 24px "Noto Sans", sans-serif; fill: url(#sand); }
.rviz {
  font: 700 25px "Liberation Sans", sans-serif; fill: #ececec; stroke: #ececec; stroke-width: .5;
  filter: drop-shadow(1.500px 1.500px 0 #555);
}
.qt { font: 600 21px "Open Sans", sans-serif; fill: #fff; }
</style>
